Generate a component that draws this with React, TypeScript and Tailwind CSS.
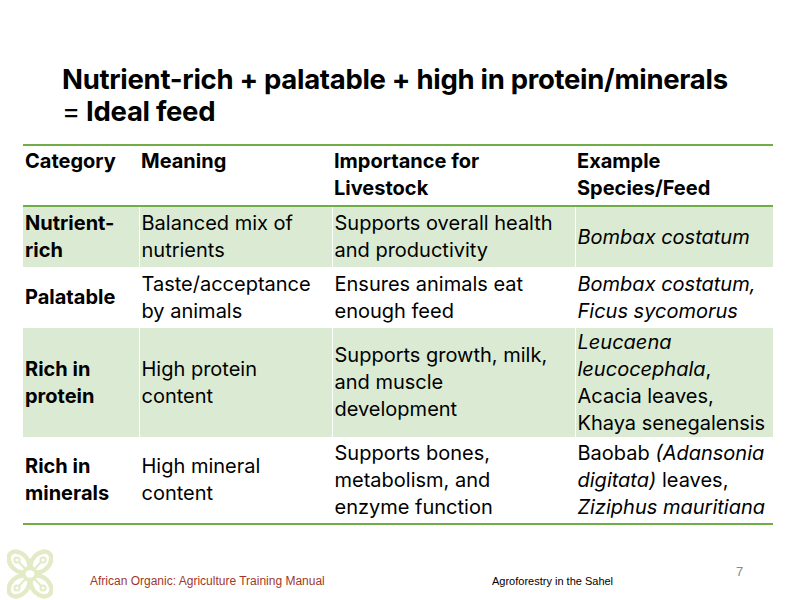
import React from "react";

function Logo() {
  const c = "#e3eac6";
  const petals = [
    { dx: -1, dy: -1 },
    { dx: 1, dy: -1 },
    { dx: -1, dy: 1 },
    { dx: 1, dy: 1 },
  ];
  return (
    <svg width="46" height="50" viewBox="0 0 46 50">
      {petals.map((p, i) => (
        <ellipse
          key={i}
          cx={23 + p.dx * 11}
          cy={25 + p.dy * 12}
          rx="12"
          ry="8.5"
          transform={`rotate(${p.dx * p.dy * 45} ${23 + p.dx * 11} ${25 + p.dy * 12})`}
          fill="none"
          stroke={c}
          strokeWidth="4.5"
        />
      ))}
      {petals.map((p, i) => (
        <g key={"s" + i}>
          <line x1={23} y1={25} x2={23 + p.dx * 12} y2={25 + p.dy * 13} stroke={c} strokeWidth="2" />
          <circle cx={23 + p.dx * 13} cy={25 + p.dy * 14} r="2.6" fill="white" stroke={c} strokeWidth="2" />
        </g>
      ))}
      <circle cx="23" cy="25" r="8" fill={c} />
      <ellipse cx="23" cy="25" rx="4.5" ry="3.8" fill="white" />
    </svg>
  );
}

const cellBase = "px-[2px] py-0 align-middle leading-[27px] whitespace-nowrap";

export default function App() {
  const rows: { h: string; green: boolean; cells: React.ReactNode[] }[] = [
    {
      h: "h-[61px]",
      green: true,
      cells: [
        <b>Nutrient-<br />rich</b>,
        <>Balanced mix of<br />nutrients</>,
        <>Supports overall health<br />and productivity</>,
        <i>Bombax costatum</i>,
      ],
    },
    {
      h: "h-[61px]",
      green: false,
      cells: [
        <b>Palatable</b>,
        <>Taste/acceptance<br />by animals</>,
        <>Ensures animals eat<br />enough feed</>,
        <><i>Bombax costatum,</i><br /><i>Ficus sycomorus</i></>,
      ],
    },
    {
      h: "h-[109px]",
      green: true,
      cells: [
        <b>Rich in<br />protein</b>,
        <>High protein<br />content</>,
        <>Supports growth, milk,<br />and muscle<br />development</>,
        <><i>Leucaena</i><br /><i>leucocephala</i>,<br />Acacia leaves,<br />Khaya senegalensis</>,
      ],
    },
    {
      h: "h-[87px]",
      green: false,
      cells: [
        <b>Rich in<br />minerals</b>,
        <>High mineral<br />content</>,
        <>Supports bones,<br />metabolism, and<br />enzyme function</>,
        <>Baobab <i>(Adansonia</i><br /><i>digitata)</i> leaves,<br /><i>Ziziphus mauritiana</i></>,
      ],
    },
  ];

  return (
    <div className="w-[796px] h-[600px] bg-white flex flex-col overflow-hidden text-black font-['Inter',sans-serif]">
      <h1 className="ml-[62px] mt-[63px] text-[27.5px] leading-[32px] font-bold tracking-[-0.3px]">
        Nutrient-rich + palatable + high in protein/minerals
        <br />
        <span className="font-normal">=</span> Ideal feed
      </h1>
      <div className="ml-[23px] mt-[17px] w-[750px]">
        <table className="table-fixed w-[750px] border-collapse text-[20px]">
          <colgroup>
            <col className="w-[116px]" />
            <col className="w-[193px]" />
            <col className="w-[243px]" />
            <col className="w-[198px]" />
          </colgroup>
          <thead>
            <tr className="h-[61px] border-t-2 border-b-2 border-[#70ad47]">
              {["Category", <>Meaning</>, <>Importance for<br />Livestock</>, <>Example<br />Species/Feed</>].map((c, i) => (
                <th key={i} className="px-[2px] pt-[2px] align-top text-left font-bold leading-[27px] whitespace-nowrap">
                  {c}
                </th>
              ))}
            </tr>
          </thead>
          <tbody className="border-b-2 border-[#70ad47]">
            {rows.map((r, ri) => (
              <tr key={ri} className={`${r.h} ${r.green ? "bg-[#dbebd3]" : "bg-white"}`}>
                {r.cells.map((c, ci) => (
                  <td
                    key={ci}
                    className={`${cellBase} ${ci > 0 ? "border-l border-white" : ""}`}
                  >
                    {c}
                  </td>
                ))}
              </tr>
            ))}
          </tbody>
        </table>
      </div>
      <div className="mt-auto h-[52px] flex items-start font-['Liberation_Sans',Arial,sans-serif]">
        <div className="w-[90px] pl-[7px] pt-[1px] shrink-0">
          <Logo />
        </div>
        <div className="w-[402px] shrink-0 mt-[26px] text-[12px] leading-[15px] text-[#a0382a]">
          African Organic: Agriculture Training Manual
        </div>
        <div className="w-[244px] shrink-0 mt-[26px] text-[11px] leading-[14px] text-black">
          Agroforestry in the Sahel
        </div>
        <div className="mt-[16px] text-[13px] leading-[16px] text-[#8a8a8a]">7</div>
      </div>
    </div>
  );
}
